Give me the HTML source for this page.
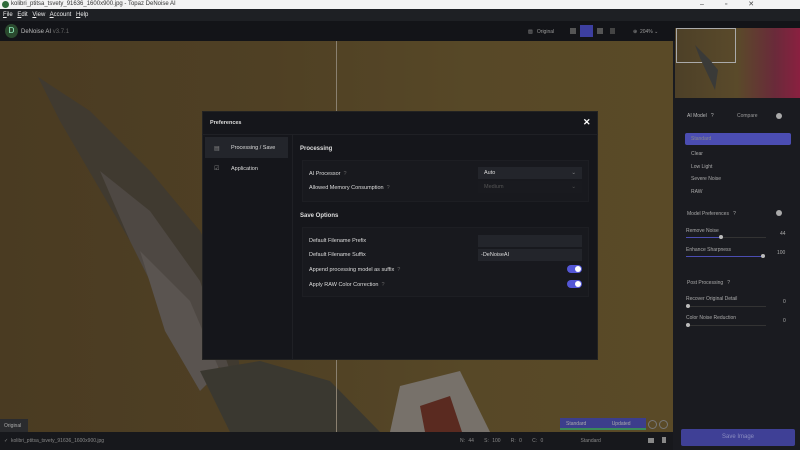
<!DOCTYPE html><html><head><style>
*{margin:0;padding:0;box-sizing:border-box}
body{width:800px;height:450px;overflow:hidden;font-family:"Liberation Sans",sans-serif;background:#16171b;position:relative;font-size:6px;color:#ccc}
.a{position:absolute}
.t{white-space:nowrap}
</style></head><body>
<div class="a" style="left:0;top:0;width:800px;height:9px;background:#f3f3f3"></div>
<div class="a" style="left:2px;top:1px;width:7px;height:7px;border-radius:50%;background:#2f6b3a"></div>
<div class="a t" style="left:11px;top:1px;color:#333;font-size:6px">kolibri_ptitsa_tsvety_91636_1600x900.jpg - Topaz DeNoise AI</div>
<div class="a t" style="left:700px;top:0;color:#444;font-size:7px;word-spacing:19px">– ▫ ✕</div>
<div class="a" style="left:0;top:9px;width:800px;height:12px;background:#1e2024"></div>
<div class="a t" style="left:3px;top:12px;color:#eee;font-size:6px;word-spacing:3px"><u>F</u>ile <u>E</u>dit <u>V</u>iew <u>A</u>ccount <u>H</u>elp</div>
<div class="a" style="left:0;top:21px;width:800px;height:20px;background:#131418"></div>
<div class="a" style="left:5px;top:24px;width:13px;height:14px;border-radius:50%;background:#2a4a2e;color:#9fc;font-size:8px;text-align:center;line-height:14px">D</div>
<div class="a t" style="left:21px;top:29px;color:#bbb;font-size:6px">DeNoise AI <span style="color:#666">v3.7.1</span></div>
<div class="a t" style="left:528px;top:29px;color:#999;font-size:5px">▧ &nbsp; Original</div>
<div class="a" style="left:570px;top:28px;width:6px;height:6px;background:#555"></div>
<div class="a" style="left:580px;top:25px;width:13px;height:12px;background:#3d3fa0"></div>
<div class="a" style="left:597px;top:28px;width:6px;height:6px;background:#555"></div>
<div class="a" style="left:610px;top:28px;width:5px;height:6px;background:#444"></div>
<div class="a t" style="left:633px;top:29px;color:#999;font-size:5px">⊕ &nbsp;204% ⌄</div>
<!-- image -->
<div class="a" style="left:0;top:41px;width:673px;height:391px;background:linear-gradient(90deg,#4a3b22 0%,#4f4024 40%,#574827 70%,#5a4a27 100%);overflow:hidden">
<svg width="673" height="391" style="position:absolute;left:0;top:0">
<polygon points="38,36 90,70 150,130 200,190 230,250 240,330 210,320 170,260 130,200 95,140 60,80" fill="#403a30"/>
<polygon points="100,130 150,170 200,240 230,330 200,320 160,260 130,200" fill="#4e4843"/>
<polygon points="140,210 190,260 220,330 200,350 165,290" fill="#5a5450"/>
<polygon points="200,330 260,320 330,340 380,391 230,391" fill="#3a3830"/>
<polygon points="400,345 460,330 490,391 390,391" fill="#77716a"/>
<polygon points="420,365 450,355 462,391 425,391" fill="#5a2a20"/>
<line x1="470" y1="240" x2="560" y2="175" stroke="#2a2a2a" stroke-width="1.5"/>
</svg>
<div class="a" style="left:336px;top:0;width:1px;height:391px;background:#8a8070"></div>
<div class="a t" style="left:0;top:378px;width:28px;height:13px;background:#2a2b2e;color:#aaa;font-size:5px;padding:4px 4px">Original</div>
<div class="a t" style="left:560px;top:377px;width:86px;height:12px;background:#3c3e8c;color:#aaa;font-size:5px;padding:3px 6px;border-bottom:2px solid #3a8a5a">Standard <span style="margin-left:24px">Updated</span></div>
<div class="a" style="left:648px;top:379px;width:9px;height:9px;border:1px solid #777;border-radius:50%"></div>
<div class="a" style="left:659px;top:379px;width:9px;height:9px;border:1px solid #777;border-radius:50%"></div>
</div>
<!-- bottom bar -->
<div class="a" style="left:0;top:432px;width:673px;height:18px;background:#17181c"></div>
<div class="a t" style="left:4px;top:438px;color:#888;font-size:5px">✓ &nbsp;kolibri_ptitsa_tsvety_91636_1600x900.jpg</div>
<div class="a t" style="left:460px;top:438px;color:#888;font-size:5px;word-spacing:2px">N: 44 &nbsp; S: 100 &nbsp; R: 0 &nbsp; C: 0 &nbsp;&nbsp;&nbsp;&nbsp;&nbsp;&nbsp;&nbsp;&nbsp;&nbsp; Standard</div>
<div class="a" style="left:648px;top:438px;width:6px;height:5px;background:#888"></div>
<div class="a" style="left:662px;top:437px;width:4px;height:6px;background:#888"></div>
<!-- right panel -->
<div class="a" style="left:673px;top:41px;width:127px;height:409px;background:#1a1b20"></div>
<div class="a" style="left:675px;top:28px;width:125px;height:70px;background:linear-gradient(90deg,#4d4028 0%,#5a4a2a 50%,#6a2a3a 80%,#8a2040 100%)"></div>
<div class="a" style="left:676px;top:28px;width:60px;height:35px;border:1px solid #aaa"></div>
<svg class="a" style="left:690px;top:40px" width="40" height="55"><polygon points="5,5 20,20 28,30 25,50 18,35 10,18" fill="#3a3a38"/></svg>
<div class="a t" style="left:687px;top:113px;color:#bbb;font-size:5px">AI Model &nbsp;&nbsp;?</div>
<div class="a t" style="left:737px;top:113px;color:#999;font-size:5px">Compare &nbsp;&nbsp;</div>
<div class="a" style="left:776px;top:113px;width:6px;height:6px;border-radius:50%;background:#aaa"></div>
<div class="a t" style="left:685px;top:133px;width:106px;height:12px;background:#4b4db2;border-radius:2px;color:#888;font-size:5px;padding:3px 6px">Standard</div>
<div class="a t" style="left:691px;top:148px;color:#aaa;font-size:5px;line-height:12.5px">Clear<br>Low Light<br>Severe Noise<br>RAW</div>
<div class="a t" style="left:687px;top:211px;color:#aaa;font-size:5px">Model Preferences &nbsp;&nbsp;?</div>
<div class="a" style="left:776px;top:210px;width:6px;height:6px;border-radius:50%;background:#aaa"></div>
<div class="a t" style="left:686px;top:228px;color:#aaa;font-size:5px">Remove Noise</div>
<div class="a t" style="left:780px;top:231px;color:#aaa;font-size:5px">44</div>
<div class="a" style="left:686px;top:237px;width:80px;height:1px;background:#333"></div>
<div class="a" style="left:686px;top:237px;width:34px;height:1px;background:#4b4db2"></div>
<div class="a" style="left:719px;top:235px;width:4px;height:4px;border-radius:50%;background:#bbb"></div>
<div class="a t" style="left:686px;top:247px;color:#aaa;font-size:5px">Enhance Sharpness</div>
<div class="a t" style="left:777px;top:250px;color:#aaa;font-size:5px">100</div>
<div class="a" style="left:686px;top:256px;width:77px;height:1px;background:#4b4db2"></div>
<div class="a" style="left:761px;top:254px;width:4px;height:4px;border-radius:50%;background:#bbb"></div>
<div class="a t" style="left:687px;top:280px;color:#aaa;font-size:5px">Post Processing &nbsp;&nbsp;?</div>
<div class="a t" style="left:686px;top:296px;color:#aaa;font-size:5px">Recover Original Detail</div>
<div class="a t" style="left:783px;top:299px;color:#aaa;font-size:5px">0</div>
<div class="a" style="left:686px;top:306px;width:80px;height:1px;background:#333"></div>
<div class="a" style="left:686px;top:304px;width:4px;height:4px;border-radius:50%;background:#bbb"></div>
<div class="a t" style="left:686px;top:315px;color:#aaa;font-size:5px">Color Noise Reduction</div>
<div class="a t" style="left:783px;top:318px;color:#aaa;font-size:5px">0</div>
<div class="a" style="left:686px;top:325px;width:80px;height:1px;background:#333"></div>
<div class="a" style="left:686px;top:323px;width:4px;height:4px;border-radius:50%;background:#bbb"></div>
<div class="a" style="left:681px;top:429px;width:114px;height:17px;background:#3f4096;border-radius:2px;color:#8a8cc0;font-size:6px;text-align:center;line-height:17px">Save Image</div>
<!-- modal -->
<div class="a" style="left:202px;top:111px;width:396px;height:249px;background:#15161b;border:1px solid #222"></div>
<div class="a t" style="left:210px;top:120px;color:#ddd;font-size:5.5px;font-weight:bold">Preferences</div>
<div class="a" style="left:583px;top:117px;color:#fff;font-size:9px;font-weight:bold">✕</div>
<div class="a" style="left:202px;top:134px;width:396px;height:1px;background:#1f2025"></div>
<div class="a" style="left:292px;top:134px;width:1px;height:226px;background:#1f2025"></div>
<div class="a" style="left:205px;top:137px;width:83px;height:21px;background:#23252b"></div>
<div class="a t" style="left:214px;top:145px;color:#888;font-size:6px">▤</div>
<div class="a t" style="left:231px;top:145px;color:#ddd;font-size:5.5px">Processing / Save</div>
<div class="a t" style="left:214px;top:165px;color:#888;font-size:6px">☑</div>
<div class="a t" style="left:231px;top:166px;color:#ddd;font-size:5.5px">Application</div>
<div class="a t" style="left:300px;top:146px;color:#ddd;font-size:6px;font-weight:bold">Processing</div>
<div class="a" style="left:302px;top:160px;width:287px;height:42px;background:#18191e;border:1px solid #1d1e23"></div>
<div class="a t" style="left:309px;top:171px;color:#ddd;font-size:5.5px">AI Processor &nbsp;<span style="color:#666">?</span></div>
<div class="a t" style="left:309px;top:185px;color:#ddd;font-size:5.5px">Allowed Memory Consumption &nbsp;<span style="color:#666">?</span></div>
<div class="a t" style="left:478px;top:167px;width:104px;height:12px;background:#23252b;color:#ddd;font-size:5.5px;padding:3px 6px">Auto<span style="float:right;color:#888">⌄</span></div>
<div class="a t" style="left:478px;top:181px;width:104px;height:12px;background:#191a1f;color:#555;font-size:5.5px;padding:3px 6px">Medium<span style="float:right">⌄</span></div>
<div class="a t" style="left:300px;top:213px;color:#ddd;font-size:6px;font-weight:bold">Save Options</div>
<div class="a" style="left:302px;top:227px;width:287px;height:70px;background:#18191e;border:1px solid #1d1e23"></div>
<div class="a t" style="left:309px;top:238px;color:#ddd;font-size:5.5px">Default Filename Prefix</div>
<div class="a t" style="left:309px;top:252px;color:#ddd;font-size:5.5px">Default Filename Suffix</div>
<div class="a t" style="left:309px;top:267px;color:#ddd;font-size:5.5px">Append processing model as suffix &nbsp;<span style="color:#666">?</span></div>
<div class="a t" style="left:309px;top:282px;color:#ddd;font-size:5.5px">Apply RAW Color Correction &nbsp;<span style="color:#666">?</span></div>
<div class="a" style="left:478px;top:235px;width:104px;height:12px;background:#23252b"></div>
<div class="a t" style="left:478px;top:249px;width:104px;height:12px;background:#23252b;color:#ddd;font-size:5.5px;padding:3px 3px">-DeNoiseAI</div>
<div class="a" style="left:567px;top:265px;width:15px;height:8px;border-radius:4px;background:#5457d6"></div>
<div class="a" style="left:575px;top:266px;width:6px;height:6px;border-radius:50%;background:#fff"></div>
<div class="a" style="left:567px;top:280px;width:15px;height:8px;border-radius:4px;background:#5457d6"></div>
<div class="a" style="left:575px;top:281px;width:6px;height:6px;border-radius:50%;background:#fff"></div>
</body></html>
